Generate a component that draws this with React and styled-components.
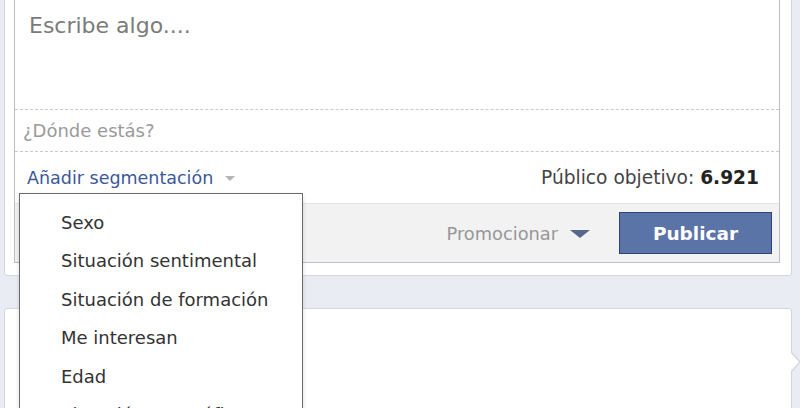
import React from "react";
import styled, { createGlobalStyle } from "styled-components";

const Global = createGlobalStyle`
  html, body {
    margin: 0;
    padding: 0;
    background: #e9ecf2;
    font-family: "DejaVu Sans", Verdana, sans-serif;
    overflow: hidden;
  }
`;

const Page = styled.div`
  display: flex;
  flex-direction: column;
  gap: 32px;
  margin-top: -10px;
  padding: 0 8px 0 4px;
  width: 800px;
  box-sizing: border-box;
`;

const Card = styled.div`
  position: relative;
  background: #fff;
  border: 1px solid #d2d6de;
  border-radius: 3px;
  padding: ${props => props.padding || "8px 11px 12px 9px"};
  min-height: ${props => props.minHeight || "auto"};
`;

const Notch = styled.span`
  position: absolute;
  right: -10px;
  top: 42px;
  width: 0;
  height: 0;
  border-top: 11px solid transparent;
  border-bottom: 11px solid transparent;
  border-left: 10px solid #d2d6de;

  &::after {
    content: "";
    position: absolute;
    left: -11px;
    top: -10px;
    border-top: 10px solid transparent;
    border-bottom: 10px solid transparent;
    border-left: 9px solid #fff;
  }
`;

const Composer = styled.div`
  border: 1px solid #b9bec8;
  display: flex;
  flex-direction: column;
`;

const TextArea = styled.div`
  height: 109px;
  padding: 13px 14px 0;
  box-sizing: border-box;
  font-size: 22px;
  line-height: 26px;
  color: #7b7b7b;
`;

const Section = styled.div`
  border-top: 1px dashed #c9c9c9;
  height: ${props => props.height};
  display: flex;
  align-items: center;
  justify-content: space-between;
  padding: ${props => props.pad || "0 8px"};
  box-sizing: content-box;
`;

const Where = styled.span`
  font-size: 18px;
  color: #9a9a9a;
`;

const Segment = styled.div`
  position: relative;
  display: flex;
  align-items: center;
  gap: 12px;
  font-size: 17.5px;
  color: #3b5998;
`;

const SmallCaret = styled.span`
  width: 0;
  height: 0;
  border-left: 5px solid transparent;
  border-right: 5px solid transparent;
  border-top: 5px solid #b5b5b5;
  margin-top: 2px;
`;

const Audience = styled.span`
  font-size: 18.6px;
  color: #444;

  b {
    color: #222;
    font-weight: bold;
  }
`;

const Footer = styled.div`
  border-top: 1px solid #e3e3e3;
  background: #f2f2f2;
  height: 58px;
  display: flex;
  align-items: center;
  justify-content: flex-end;
  padding-right: 7px;
  gap: 29px;
`;

const Promote = styled.span`
  display: flex;
  align-items: center;
  gap: 12px;
  font-size: 17.8px;
  color: #979797;
`;

const PromoteCaret = styled.span`
  width: 0;
  height: 0;
  border-left: 10px solid transparent;
  border-right: 10px solid transparent;
  border-top: 8px solid #55698f;
  margin-top: 2px;
`;

const Button = styled.button`
  width: 153px;
  height: 42px;
  background: #5b74a8;
  border: 1px solid #2d4377;
  color: #fff;
  font-family: "DejaVu Sans", Verdana, sans-serif;
  font-weight: bold;
  font-size: 18.5px;
  padding: 0;
`;

const Menu = styled.ul`
  position: absolute;
  left: -8px;
  top: calc(100% + 5px);
  width: 282px;
  margin: 0;
  padding: 10px 0 0;
  list-style: none;
  background: #fff;
  border: 1px solid #6a6a6a;
  box-shadow: 0 2px 4px rgba(0, 0, 0, 0.15);
  z-index: 5;
`;

const MenuItem = styled.li`
  padding-left: 41px;
  height: 38.5px;
  line-height: 38px;
  font-size: 18px;
  color: #333;
  white-space: nowrap;
`;

const items = [
  "Sexo",
  "Situación sentimental",
  "Situación de formación",
  "Me interesan",
  "Edad",
  "Situación geográfica",
];

export default function App() {
  return (
    <>
      <Global />
      <Page>
        <Card>
          <Composer>
            <TextArea>Escribe algo....</TextArea>
            <Section height="41px">
              <Where>¿Dónde estás?</Where>
            </Section>
            <Section height="51px" pad="0 20px 0 12px">
              <Segment>
                Añadir segmentación
                <SmallCaret />
                <Menu>
                  {items.map(item => (
                    <MenuItem key={item}>{item}</MenuItem>
                  ))}
                </Menu>
              </Segment>
              <Audience>
                Público objetivo: <b>6.921</b>
              </Audience>
            </Section>
            <Footer>
              <Promote>
                Promocionar
                <PromoteCaret />
              </Promote>
              <Button>Publicar</Button>
            </Footer>
          </Composer>
        </Card>
        <Card padding="0" minHeight="140px">
          <Notch />
        </Card>
      </Page>
    </>
  );
}
